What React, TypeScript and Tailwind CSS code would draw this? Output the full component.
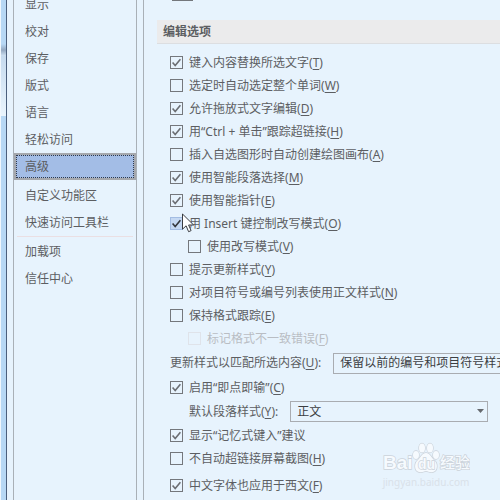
import React, { useState } from 'react';

interface Option {
  id: string;
  label: string;
  hotkey?: string;
  checked?: boolean;
  indent?: boolean;
  disabled?: boolean;
  hovered?: boolean;
}

const NAV_GROUPS: string[][] = [
  ['显示', '校对', '保存', '版式', '语言', '轻松访问', '高级'],
  ['自定义功能区', '快速访问工具栏'],
  ['加载项', '信任中心'],
];

const EDIT_OPTIONS: Option[] = [
  { id: 'replace', label: '键入内容替换所选文字', hotkey: 'T', checked: true },
  { id: 'whole-word', label: '选定时自动选定整个单词', hotkey: 'W' },
  { id: 'drag', label: '允许拖放式文字编辑', hotkey: 'D', checked: true },
  { id: 'ctrl-click', label: '用“Ctrl + 单击”跟踪超链接', hotkey: 'H', checked: true },
  { id: 'canvas', label: '插入自选图形时自动创建绘图画布', hotkey: 'A' },
  { id: 'smart-para', label: '使用智能段落选择', hotkey: 'M', checked: true },
  { id: 'smart-cursor', label: '使用智能指针', hotkey: 'E', checked: true },
  { id: 'insert-key', label: '用 Insert 键控制改写模式', hotkey: 'O', checked: true, hovered: true },
  { id: 'overtype', label: '使用改写模式', hotkey: 'V', indent: true },
  { id: 'prompt-style', label: '提示更新样式', hotkey: 'Y' },
  { id: 'list-body', label: '对项目符号或编号列表使用正文样式', hotkey: 'N' },
  { id: 'track-format', label: '保持格式跟踪', hotkey: 'E' },
  { id: 'mark-format', label: '标记格式不一致错误', hotkey: 'F', indent: true, disabled: true },
];

const Hotkey: React.FC<{ letter?: string }> = ({ letter }) =>
  letter ? <>(<span className="underline underline-offset-2">{letter}</span>)</> : null;

const CheckRow: React.FC<{ option: Option }> = ({ option }) => {
  const [checked, setChecked] = useState(!!option.checked);
  const boxStyle = option.disabled
    ? 'border-[#dfe3ea]'
    : option.hovered
      ? 'border-[#a3bde3] bg-[#c5d9f3]'
      : 'border-[#74777c]';

  return (
    <div className={`flex h-[23px] items-center ${option.indent ? 'pl-[18px]' : ''}`}>
      <label className={`flex items-center gap-1.5 whitespace-nowrap ${option.disabled ? 'text-[#b9bdc3]' : ''}`}>
        <span className="relative flex">
          <input
            type="checkbox"
            className={`size-[13px] appearance-none border ${boxStyle}`}
            checked={checked}
            disabled={option.disabled}
            onChange={e => setChecked(e.target.checked)}
          />
          {checked && (
            <svg className="pointer-events-none absolute inset-0 size-[13px]" viewBox="0 0 13 13" fill="none" stroke={option.hovered ? '#33373d' : '#6b6e73'} strokeWidth="1.6">
              <path d="M2.6 6.4l2.6 3L10.4 3.2" />
            </svg>
          )}
          {option.hovered && (
            <svg className="pointer-events-none absolute -top-1 left-3 z-10 h-[20px] w-[13px]" viewBox="0 0 13 20" fill="#fff" stroke="#3a3d42" strokeWidth="1">
              <path d="M.5 1v15.2l3.6-3.4 2.5 5.9 2.5-1.1-2.5-5.6h5z" />
            </svg>
          )}
        </span>
        <span>{option.label}<Hotkey letter={option.hotkey} /></span>
      </label>
    </div>
  );
};

const SelectBox: React.FC<{ id: string; value: string; className: string }> = ({ id, value, className }) => (
  <div className={`relative shrink-0 ${className}`}>
    <select id={id} className="block h-[21px] w-full appearance-none border border-[#a9acb1] bg-transparent px-1.5 text-[#3c3e42]">
      <option>{value}</option>
    </select>
    <svg className="pointer-events-none absolute top-2 right-1 h-1 w-[7px]" viewBox="0 0 7 4" fill="#66696e">
      <path d="M0 0h7L3.5 4z" />
    </svg>
  </div>
);

const Watermark = () => (
  <div className="pointer-events-none absolute right-[30px] bottom-3 flex flex-col items-center">
    <svg className="h-9 w-[88px]" viewBox="0 0 88 36" fill="#f6fafe" stroke="#cbd2da" strokeWidth="1.4" paintOrder="stroke">
      <ellipse cx="34" cy="15" rx="3" ry="4" />
      <ellipse cx="40" cy="8" rx="3" ry="4.5" />
      <ellipse cx="48" cy="8" rx="3" ry="4.5" />
      <ellipse cx="54" cy="15" rx="3" ry="4" />
      <path d="M44 13c-4 0-5 4-8 7-4 3-4 11 1 12 3 1 5-1 7-1s4 2 7 1c5-1 5-9 1-12-3-3-4-7-8-7z" />
      <text x="1" y="29" fontSize="19" fontWeight="700" fontFamily="Liberation Sans, sans-serif">Bai</text>
      <text x="36" y="29" fontSize="14" fontWeight="700" fontFamily="Liberation Sans, sans-serif">du</text>
      <text x="58" y="28" fontSize="15" fontWeight="500" fontFamily="Noto Sans CJK SC, sans-serif">经验</text>
    </svg>
    <span className="text-[10px] leading-3 text-[#d9e1e9]">jingyan.baidu.com</span>
  </div>
);

const App: React.FC = () => {
  const [active, setActive] = useState('高级');

  return (
    <div className="relative flex h-screen overflow-hidden bg-[#e7f3fd] font-['Noto_Sans','Noto_Sans_CJK_SC',sans-serif] text-[12px] leading-4 text-[#5c5e62]">
      {/* sliver of the window behind the dialog */}
      <div className="flex w-[7px] shrink-0 flex-col border-r border-l border-r-[#4b5f7c] border-l-[#f0f7fd] bg-[#b7d8f5]">
        <div className="h-11" />
        <div className="h-3 bg-linear-to-b from-[#b7d8f5] via-[#94a9c2] to-[#cfe2f3]" />
        <div className="h-[60px] bg-linear-to-b from-[#c6dbef] to-[#eaf5fd]" />
      </div>

      <nav className="ml-1.5 w-[124px] shrink-0 overflow-hidden border-x border-[#a9b0b7]">
        <div className="-mx-px -mt-[9px] flex flex-col">
          {NAV_GROUPS.map((group, i) => (
            <div key={group[0]} className={`flex flex-col ${i === 1 ? 'pt-0.5' : ''}`}>
              {i === 2 && <hr className="mx-1 mb-px border-[#eadfe3]" />}
              {group.map(item => (
                <button
                  key={item}
                  onClick={() => setActive(item)}
                  className={`h-[27px] text-left ${active === item ? 'border-x-3 border-y-2 border-[#a5a8ad] bg-[#a3bde6]' : 'px-3'}`}
                >
                  {active === item ? <span className="flex h-full items-center border border-dotted border-[#2f3a4c] px-2">{item}</span> : item}
                </button>
              ))}
            </div>
          ))}
        </div>
      </nav>

      <main className="ml-1.5 min-w-0 flex-1 overflow-hidden border-l border-[#a9b0b7] pl-[13px]">
        <div className="h-5 pl-[15px]">
          <div className="h-px w-[21px] bg-[#74777c]" />
        </div>
        <h2 className="flex h-6 items-center border-b border-[#dcdee1] bg-[#ebebec] px-1.5 font-bold">编辑选项</h2>

        <div className="pt-[7px] pl-[13px]">
          {EDIT_OPTIONS.map(option => <CheckRow key={option.id} option={option} />)}

          <div className="flex h-[26px] items-center gap-3 whitespace-nowrap">
            <label htmlFor="update-style">更新样式以匹配所选内容(<span className="underline underline-offset-2">U</span>):</label>
            <SelectBox id="update-style" value="保留以前的编号和项目符号样式" className="w-[240px]" />
          </div>
          <CheckRow option={{ id: 'click-type', label: '启用“即点即输”', hotkey: 'C', checked: true }} />
          <div className="flex h-[25px] items-center gap-3 pl-[19px] whitespace-nowrap">
            <label htmlFor="default-style">默认段落样式(<span className="underline underline-offset-2">Y</span>):</label>
            <SelectBox id="default-style" value="正文" className="w-[198px]" />
          </div>
          <CheckRow option={{ id: 'autocomplete', label: '显示“记忆式键入”建议', checked: true }} />
          <CheckRow option={{ id: 'no-link-shot', label: '不自动超链接屏幕截图', hotkey: 'H' }} />
          <div className="pt-1">
            <CheckRow option={{ id: 'cjk-latin', label: '中文字体也应用于西文', hotkey: 'F', checked: true }} />
          </div>
        </div>
      </main>

      <Watermark />
    </div>
  );
};

export default App;
